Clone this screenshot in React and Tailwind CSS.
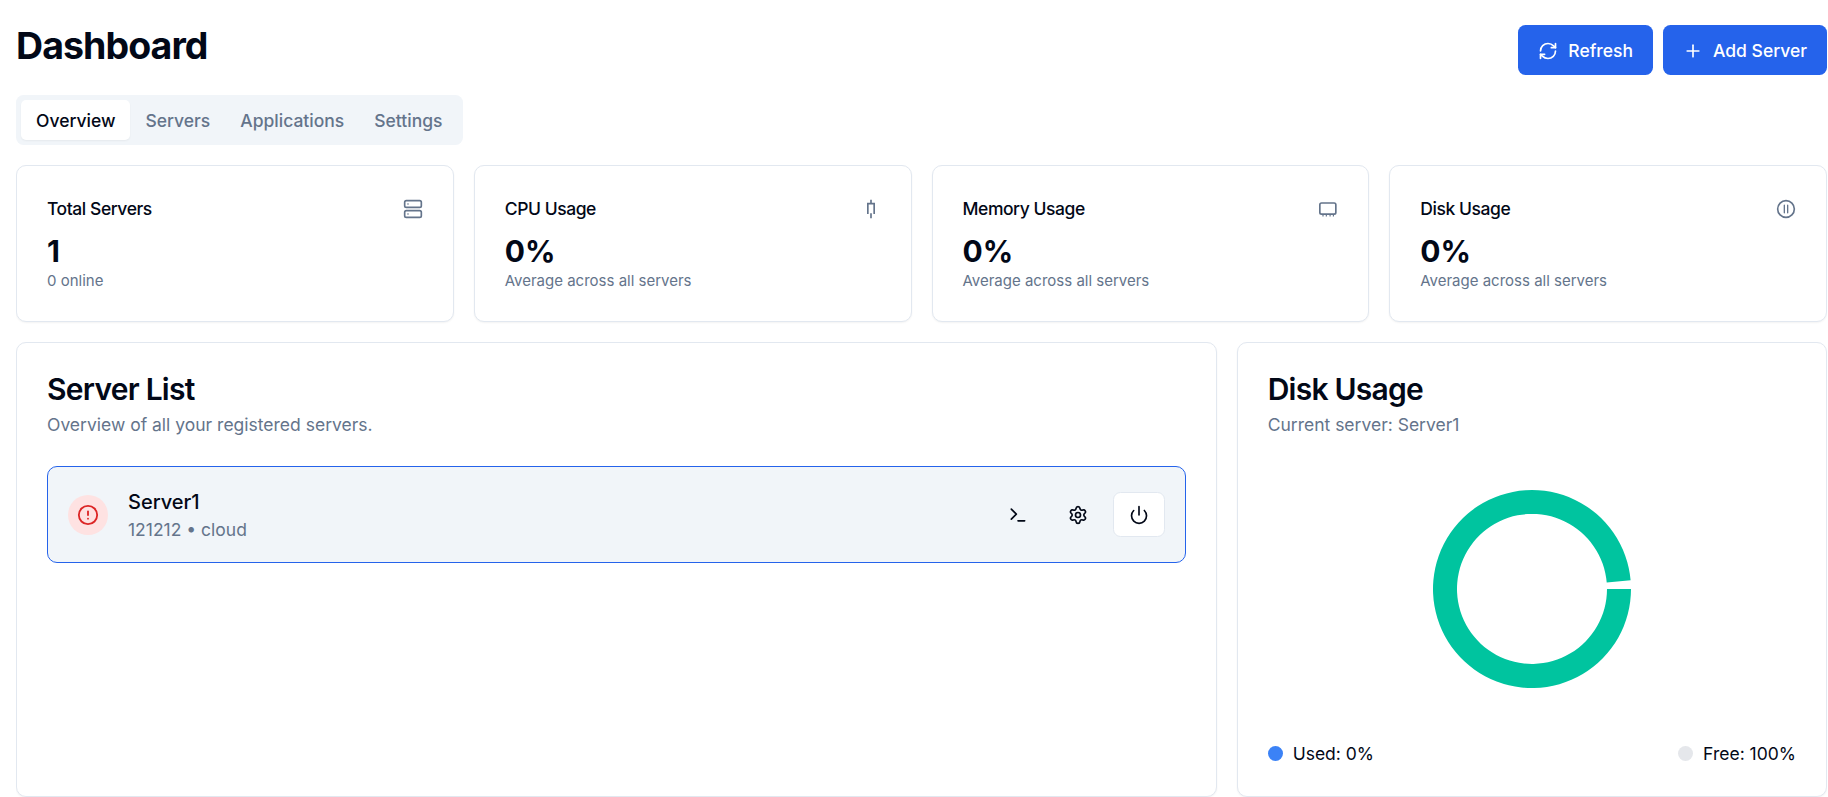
import React from "react";
import { RefreshCw, Plus, Server, CircleAlert, Terminal, Settings, Power } from "lucide-react";

function CpuGlyph() {
  return (
    <svg width="20" height="20" viewBox="0 0 24 24" fill="none" stroke="#64748b" strokeWidth="2" strokeLinecap="butt">
      <path d="M12 1v4.5M8.2 18V5.5h7.6V18M12 17v6" />
    </svg>
  );
}

function MemoryGlyph() {
  return (
    <svg width="20" height="20" viewBox="0 0 24 24" fill="none" stroke="#64748b" strokeWidth="2" strokeLinecap="round">
      <rect x="2.2" y="4.8" width="19.2" height="13.4" rx="2" />
      <path d="M6 18.5v2.5M10 18.5v2.5M14.5 18.5v2.5M18.5 18.5v2.5" strokeWidth="1.4" strokeLinecap="butt" />
    </svg>
  );
}

function PauseGlyph() {
  return (
    <svg width="20" height="20" viewBox="0 0 24 24" fill="none" stroke="#64748b" strokeWidth="2" strokeLinecap="round">
      <circle cx="12" cy="12" r="10" />
      <path d="M10 7.5v9M14 7.5v9" strokeWidth="1.6" />
    </svg>
  );
}

function StatCard({ title, value, sub, icon }) {
  return (
    <div className="h-[156.5px] rounded-[10px] border border-[#e2e8f0] bg-white px-[30px] pt-[30px] shadow-[0_1px_2px_rgba(0,0,0,0.05)]">
      <div className="flex h-[25px] items-center justify-between">
        <h3 className="text-[17.5px] leading-[25px] font-medium tracking-[-0.025em] text-[#020817]">{title}</h3>
        {icon}
      </div>
      <div className="mt-[10px] text-[30px] leading-[40px] font-bold text-[#020817]">{value}</div>
      <p className="text-[15px] leading-[20px] text-[#64748b]">{sub}</p>
    </div>
  );
}

function GhostButton({ children }) {
  return (
    <button className="flex h-[45px] w-[50px] items-center justify-center rounded-[7.5px] text-[#020817]">{children}</button>
  );
}

export default function App() {
  return (
    <div
      className="ml-4 h-[797px] w-[1811px] overflow-hidden bg-white text-[#020817]"
      style={{ fontFamily: "Inter, 'Noto Sans', sans-serif" }}
    >
      <header className="flex items-start justify-between pt-[23px]">
        <h1 className="text-[37.5px] leading-[45px] font-bold tracking-[-0.025em] text-[#020817]">Dashboard</h1>
        <div className="mt-[2px] flex gap-[10px]">
          <button className="flex h-[50px] items-center gap-[10px] rounded-[7.5px] bg-[#2563eb] px-5 pt-[2px] text-[17.5px] font-medium text-white">
            <RefreshCw size={20} />
            Refresh
          </button>
          <button className="flex h-[50px] items-center gap-[10px] rounded-[7.5px] bg-[#2563eb] px-5 pt-[2px] text-[17.5px] font-medium text-white">
            <Plus size={20} />
            Add Server
          </button>
        </div>
      </header>

      <nav className="mt-5 flex h-[50px] w-[447px] items-center rounded-[7.5px] bg-[#f1f5f9] p-[5px] text-[17.5px] font-medium text-[#64748b]">
        <span className="flex h-10 items-center rounded-[5px] bg-white px-[15px] pt-[2px] text-[#020817] shadow-[0_1px_2px_rgba(0,0,0,0.05)]">Overview</span>
        <span className="flex h-10 items-center px-[15px] pt-[2px]">Servers</span>
        <span className="flex h-10 items-center px-[15px] pt-[2px]">Applications</span>
        <span className="flex h-10 items-center px-[15px] pt-[2px]">Settings</span>
      </nav>

      <section className="mt-5 grid grid-cols-4 gap-5">
        <StatCard title="Total Servers" value="1" sub="0 online" icon={<Server size={20} color="#64748b" />} />
        <StatCard title="CPU Usage" value="0%" sub="Average across all servers" icon={<CpuGlyph />} />
        <StatCard title="Memory Usage" value="0%" sub="Average across all servers" icon={<MemoryGlyph />} />
        <StatCard title="Disk Usage" value="0%" sub="Average across all servers" icon={<PauseGlyph />} />
      </section>

      <section className="mt-5 grid h-[455px] grid-cols-12 gap-5">
        <div className="col-span-8 rounded-[10px] border border-[#e2e8f0] bg-white px-[30px] pt-[31px] shadow-[0_1px_2px_rgba(0,0,0,0.05)]">
          <h2 className="text-[30px] leading-[30px] font-semibold tracking-[-0.025em]">Server List</h2>
          <p className="mt-[8.5px] text-[17.5px] leading-[25px] text-[#64748b]">Overview of all your registered servers.</p>
          <div className="mt-[29px] flex h-[97px] items-center justify-between rounded-[10px] border border-[#2563eb] bg-[#f1f5f9] px-5">
            <div className="flex items-center gap-5">
              <div className="flex h-10 w-10 items-center justify-center rounded-full bg-[#fee2e2]">
                <CircleAlert size={22} color="#dc2626" />
              </div>
              <div>
                <div className="text-[20px] leading-[30px] font-medium">Server1</div>
                <div className="text-[17.5px] leading-[25px] text-[#64748b]">121212 • cloud</div>
              </div>
            </div>
            <div className="flex items-center gap-[10px]">
              <GhostButton><Terminal size={20} /></GhostButton>
              <GhostButton><Settings size={20} /></GhostButton>
              <button className="flex h-[45px] w-[52px] items-center justify-center rounded-[7.5px] border border-[#e2e8f0] bg-white text-[#020817]">
                <Power size={20} />
              </button>
            </div>
          </div>
        </div>

        <div className="col-span-4 flex flex-col rounded-[10px] border border-[#e2e8f0] bg-white px-[30px] pt-[31px] shadow-[0_1px_2px_rgba(0,0,0,0.05)]">
          <h2 className="text-[30px] leading-[30px] font-semibold tracking-[-0.025em]">Disk Usage</h2>
          <p className="mt-[8.5px] text-[17.5px] leading-[25px] text-[#64748b]">Current server: Server1</p>
          <div className="mt-[30px] flex h-[244px] items-center justify-center">
            <svg width="200" height="200" viewBox="-100 -100 200 200">
              <path
                d="M99 0 A99 99 0 1 1 98.62 -8.63 L74.72 -6.54 A75 75 0 1 0 75 0 Z"
                fill="#00C49F"
              />
            </svg>
          </div>
          <div className="mt-[30px] flex justify-between text-[17.5px] leading-[25px]">
            <div className="flex items-center gap-[10px]">
              <span className="h-[15px] w-[15px] rounded-full bg-[#3b82f6]" />
              Used: 0%
            </div>
            <div className="flex items-center gap-[10px]">
              <span className="h-[15px] w-[15px] rounded-full bg-[#e5e7eb]" />
              Free: 100%
            </div>
          </div>
        </div>
      </section>
    </div>
  );
}
